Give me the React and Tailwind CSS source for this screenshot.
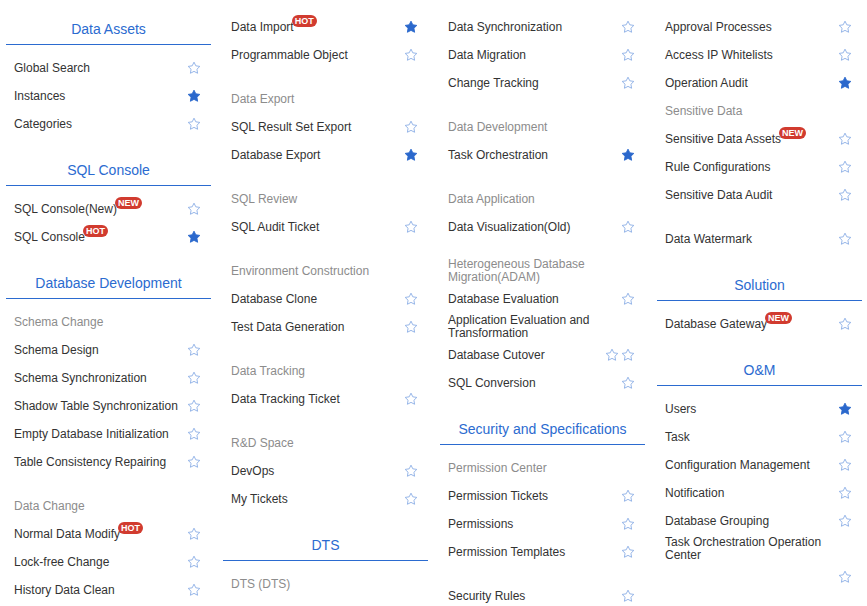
import React from "react";

function Star({filled}) {
  return (
    <svg width="14" height="14" viewBox="0 0 24 24" className="shrink-0">
      <polygon
        points="12,2 15.09,8.26 22,9.27 17,14.14 18.18,21.02 12,17.77 5.82,21.02 7,14.14 2,9.27 8.91,8.26"
        fill={filled ? "#2b68cc" : "none"}
        stroke={filled ? "#2b68cc" : "#8fb0e6"}
        strokeWidth="1.6"
        strokeLinejoin="round"
      />
    </svg>
  );
}

function Badge({children}) {
  return (
    <span className="relative -top-[7px] -ml-[2px] inline-block h-[12px] rounded-full bg-[#d13b2f] px-[3px] text-[9px] font-bold leading-[12px] text-white">
      {children}
    </span>
  );
}

function Title({children, first}) {
  return (
    <div className={(first ? "mt-[2px] " : "mt-[18px] ") + "flex h-[30px] items-center justify-center border-b border-[#2b6bd0] text-[14px] text-[#2b6bd0]"}>
      {children}
    </div>
  );
}

function Item({name, badge, filled, star = 1, two}) {
  return (
    <div className="flex h-[28px] items-center justify-between pl-2 pr-[10px] text-[12px] text-[#333]">
      <span className={two ? "leading-[13px]" : ""}>
        {name}
        {badge && <Badge>{badge}</Badge>}
      </span>
      <span className="flex gap-[2px]">
        {star >= 2 && <Star />}
        {star >= 1 && <Star filled={filled} />}
      </span>
    </div>
  );
}

function Label({children, two}) {
  return (
    <div className={"flex h-[28px] items-center pl-2 text-[12px] text-[#8c8c8c] " + (two ? "leading-[13px]" : "")}>
      <span>{children}</span>
    </div>
  );
}

function Group({children, gap = true}) {
  return <div className={gap ? "mt-4" : ""}>{children}</div>;
}

export default function App() {
  return (
    <div className="flex h-[606px] w-[867px] gap-3 overflow-hidden bg-white px-[6px] pt-[13px] font-['Liberation_Sans',Arial,sans-serif]">
      {/* column 1 */}
      <div className="w-[205px] shrink-0">
        <Title first>Data Assets</Title>
        <div className="pt-[9px]">
          <Item name="Global Search" />
          <Item name="Instances" filled />
          <Item name="Categories" />
        </div>
        <Title>SQL Console</Title>
        <div className="pt-[9px]">
          <Item name="SQL Console(New)" badge="NEW" />
          <Item name="SQL Console" badge="HOT" filled />
        </div>
        <Title>Database Development</Title>
        <div className="pt-[9px]">
          <Label>Schema Change</Label>
          <Item name="Schema Design" />
          <Item name="Schema Synchronization" />
          <Item name="Shadow Table Synchronization" />
          <Item name="Empty Database Initialization" />
          <Item name="Table Consistency Repairing" />
          <Group>
            <Label>Data Change</Label>
            <Item name="Normal Data Modify" badge="HOT" />
            <Item name="Lock-free Change" />
            <Item name="History Data Clean" />
          </Group>
        </div>
      </div>

      {/* column 2 */}
      <div className="w-[205px] shrink-0">
        <Item name="Data Import" badge="HOT" filled />
        <Item name="Programmable Object" />
        <Group>
          <Label>Data Export</Label>
          <Item name="SQL Result Set Export" />
          <Item name="Database Export" filled />
        </Group>
        <Group>
          <Label>SQL Review</Label>
          <Item name="SQL Audit Ticket" />
        </Group>
        <Group>
          <Label>Environment Construction</Label>
          <Item name="Database Clone" />
          <Item name="Test Data Generation" />
        </Group>
        <Group>
          <Label>Data Tracking</Label>
          <Item name="Data Tracking Ticket" />
        </Group>
        <Group>
          <Label>R&amp;D Space</Label>
          <Item name="DevOps" />
          <Item name="My Tickets" />
        </Group>
        <Title>DTS</Title>
        <div className="pt-[9px]">
          <Label>DTS (DTS)</Label>
        </div>
      </div>

      {/* column 3 */}
      <div className="w-[205px] shrink-0">
        <Item name="Data Synchronization" />
        <Item name="Data Migration" />
        <Item name="Change Tracking" />
        <Group>
          <Label>Data Development</Label>
          <Item name="Task Orchestration" filled />
        </Group>
        <Group>
          <Label>Data Application</Label>
          <Item name="Data Visualization(Old)" />
        </Group>
        <Group>
          <Label two>
            Heterogeneous Database
            <br />
            Migration(ADAM)
          </Label>
          <Item name="Database Evaluation" />
          <Item
            two
            star={0}
            name={
              <>
                Application Evaluation and
                <br />
                Transformation
              </>
            }
          />
          <Item name="Database Cutover" star={2} />
          <Item name="SQL Conversion" />
        </Group>
        <Title>Security and Specifications</Title>
        <div className="pt-[9px]">
          <Label>Permission Center</Label>
          <Item name="Permission Tickets" />
          <Item name="Permissions" />
          <Item name="Permission Templates" />
          <Group>
            <Item name="Security Rules" />
          </Group>
        </div>
      </div>

      {/* column 4 */}
      <div className="w-[205px] shrink-0">
        <Item name="Approval Processes" />
        <Item name="Access IP Whitelists" />
        <Item name="Operation Audit" filled />
        <Label>Sensitive Data</Label>
        <Item name="Sensitive Data Assets" badge="NEW" />
        <Item name="Rule Configurations" />
        <Item name="Sensitive Data Audit" />
        <Group>
          <Item name="Data Watermark" />
        </Group>
        <Title>Solution</Title>
        <div className="pt-[9px]">
          <Item name="Database Gateway" badge="NEW" />
        </div>
        <Title>O&amp;M</Title>
        <div className="pt-[9px]">
          <Item name="Users" filled />
          <Item name="Task" />
          <Item name="Configuration Management" />
          <Item name="Notification" />
          <Item name="Database Grouping" />
          <Item
            two
            star={0}
            name={
              <>
                Task Orchestration Operation
                <br />
                Center
              </>
            }
          />
          <Item name="" />
        </div>
      </div>
    </div>
  );
}
